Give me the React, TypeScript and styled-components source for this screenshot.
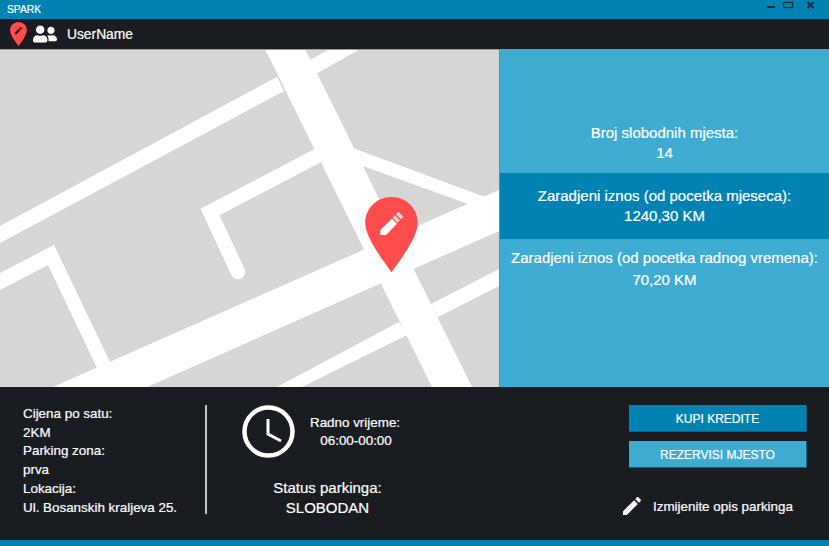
import styled, { createGlobalStyle } from "styled-components";
import { MdEdit } from "react-icons/md";
import { FaUserFriends } from "react-icons/fa";

const Global = createGlobalStyle`
  html, body {
    margin: 0;
    padding: 0;
    background: #191c21;
    overflow: hidden;
  }
  * { box-sizing: border-box; }
`;

const Page = styled.div`
  width: 829px;
  height: 546px;
  display: flex;
  flex-direction: column;
  font-family: "Liberation Sans", Arial, sans-serif;
  font-size: 13.4px;
  color: #fff;
  background: #191c21;
  -webkit-text-stroke: 0.2px #fff;
`;

const TitleBar = styled.div`
  height: 19px;
  flex: none;
  display: flex;
  align-items: center;
  justify-content: space-between;
  padding: 0 15px 0 7px;
  background: #0083b3;
  font-size: 10.3px;
`;

const WindowButtons = styled.svg`
  align-self: flex-start;
  margin-top: 1px;
`;

const NavBar = styled.div`
  height: 30px;
  flex: none;
  display: flex;
  align-items: center;
  gap: 6px;
  padding-left: 10px;
`;

const UserName = styled.span`
  margin-left: 4px;
  font-size: 13.8px;
`;

const Main = styled.div`
  height: 338px;
  flex: none;
  display: flex;
`;

const MapArea = styled.div`
  position: relative;
  width: 500px;
  flex: none;
  background: #d6d6d6;
  border-top: 1px solid #9a9a9a;
  border-right: 1px solid #6f8791;
`;

const MapDrawing = styled.svg`
  display: block;
`;

const MapPin = styled.div`
  position: absolute;
  left: 365px;
  top: 147px;
`;

const SidePanel = styled.div`
  flex: 1;
  display: grid;
  grid-template-rows: 124px 66px 1fr;
  background: #3eabd0;
`;

const Stat = styled.div<{ $dark?: boolean; $tall?: boolean; $align: string }>`
  display: flex;
  flex-direction: column;
  align-items: center;
  justify-content: ${(p) => p.$align};
  padding: ${(p) => (p.$tall ? "8px" : "9px")} 0 10px;
  font-size: 15px;
  line-height: ${(p) => (p.$tall ? "22px" : "20px")};
  background: ${(p) => (p.$dark ? "#0083b3" : "transparent")};
`;

const Footer = styled.div`
  height: 153px;
  flex: none;
  display: flex;
  padding-top: 18px;
`;

const InfoColumn = styled.div`
  width: 207px;
  height: 109px;
  flex: none;
  padding-left: 23px;
  border-right: 2px solid #c4c4c4;
  line-height: 18.7px;
`;

const MiddleColumn = styled.div`
  width: 250px;
  flex: none;
  display: flex;
  flex-direction: column;
  padding-left: 35px;
`;

const HoursRow = styled.div`
  display: flex;
  align-items: center;
  gap: 15px;
  height: 53px;
`;

const Hours = styled.div`
  text-align: center;
  line-height: 18px;
`;

const HoursValue = styled.div`
  padding-left: 2px;
`;

const Status = styled.div`
  width: 171px;
  margin-top: 20px;
  text-align: center;
  font-size: 15px;
  line-height: 20px;
`;

const ActionColumn = styled.div`
  display: flex;
  flex-direction: column;
  margin-left: 172px;
`;

const ActionButton = styled.button<{ $light?: boolean }>`
  width: 178px;
  height: 27px;
  margin-bottom: 9px;
  padding: 1px 0 0;
  border: none;
  border-right: 1px solid #0f5f7d;
  border-bottom: 1px solid #0f5f7d;
  background: ${(p) => (p.$light ? "#3eabd0" : "#0083b3")};
  color: #fff;
  font-family: inherit;
  font-size: 12px;
`;

const EditLink = styled.div`
  display: flex;
  align-items: center;
  gap: 9px;
  margin: 17px 0 0 -9px;
`;

const BottomBar = styled.div`
  height: 6px;
  flex: none;
  background: #0083b3;
`;

function PinShape({ size, pencil, cap }: { size: number; pencil: string; cap: string }) {
  return (
    <svg width={size} height={size * 1.42} viewBox="0 0 53 76">
      <path d="M26.5 0C11.5 0 0 11.5 0 26C0 40 15 60 26.5 76C38 60 53 40 53 26C53 11.5 41.5 0 26.5 0Z" fill="#ff4d4d" />
      <path d="M15 38.5L15.5 33L27 22L32 27L21 38.5Z" fill={pencil} />
      <path d="M27.5 21L30 18.5L35 23.5L32.5 26Z" fill={cap} />
      <path d="M31 17.5L33.5 15L38.5 20L36 22.5Z" fill={cap} />
    </svg>
  );
}

function ClockIcon() {
  return (
    <svg width="53" height="53" viewBox="0 0 53 53">
      <circle cx="26.5" cy="26.5" r="24" fill="none" stroke="#fff" strokeWidth="4.5" />
      <path d="M26 14V29L39 36" fill="none" stroke="#fff" strokeWidth="3" />
    </svg>
  );
}

function RoadMap() {
  return (
    <MapDrawing width="499" height="337" viewBox="0 0 499 337">
      <g fill="#fff">
        <polygon points="265,-1 305,-1 472,337 432,337" />
        <polygon points="0,176 277,27 284,41 0,193" />
        <polygon points="308,11 330,-1 360,-1 316,24" />
        <polygon points="53,337 499,140 499,181 147,337" />
        <polygon points="350,97 485,147 468,154 360,115" />
        <polygon points="0,223 54,195 110,312 97,318 48,215 0,240" />
        <polygon points="431,254 499,219 499,236 438,267" />
        <polygon points="277,337 399,272 407,285 302,337" />
      </g>
      <path d="M317 106L210 162L238 222" fill="none" stroke="#fff" strokeWidth="14.5" strokeLinecap="round" />
    </MapDrawing>
  );
}

export default function App() {
  return (
    <Page>
      <Global />
      <TitleBar>
        <span>SPARK</span>
        <WindowButtons width="47" height="9" viewBox="0 0 47 9">
          <rect x="0" y="5" width="8" height="2" fill="#222b33" />
          <rect x="16.5" y="1.5" width="9" height="5" fill="none" stroke="#222b33" strokeWidth="1.2" />
          <path d="M40.5 1L46.5 7M46.5 1L40.5 7" stroke="#222b33" strokeWidth="2" />
        </WindowButtons>
      </TitleBar>

      <NavBar>
        <PinShape size={17} pencil="#2a1a1e" cap="#2a1a1e" />
        <FaUserFriends size={24} />
        <UserName>UserName</UserName>
      </NavBar>

      <Main>
        <MapArea>
          <RoadMap />
          <MapPin>
            <PinShape size={53} pencil="#fff" cap="#d6d6d6" />
          </MapPin>
        </MapArea>
        <SidePanel>
          <Stat $align="flex-end">
            <span>Broj slobodnih mjesta:</span>
            <span>14</span>
          </Stat>
          <Stat $dark $align="center">
            <span>Zaradjeni iznos (od pocetka mjeseca):</span>
            <span>1240,30 KM</span>
          </Stat>
          <Stat $tall $align="flex-start">
            <span>Zaradjeni iznos (od pocetka radnog vremena):</span>
            <span>70,20 KM</span>
          </Stat>
        </SidePanel>
      </Main>

      <Footer>
        <InfoColumn>
          <div>Cijena po satu:</div>
          <div>2KM</div>
          <div>Parking zona:</div>
          <div>prva</div>
          <div>Lokacija:</div>
          <div>Ul. Bosanskih kraljeva 25.</div>
        </InfoColumn>
        <MiddleColumn>
          <HoursRow>
            <ClockIcon />
            <Hours>
              <div>Radno vrijeme:</div>
              <HoursValue>06:00-00:00</HoursValue>
            </Hours>
          </HoursRow>
          <Status>
            <div>Status parkinga:</div>
            <div>SLOBODAN</div>
          </Status>
        </MiddleColumn>
        <ActionColumn>
          <ActionButton>KUPI KREDITE</ActionButton>
          <ActionButton $light>REZERVISI MJESTO</ActionButton>
          <EditLink>
            <MdEdit size={24} />
            <span>Izmijenite opis parkinga</span>
          </EditLink>
        </ActionColumn>
      </Footer>
      <BottomBar />
    </Page>
  );
}
